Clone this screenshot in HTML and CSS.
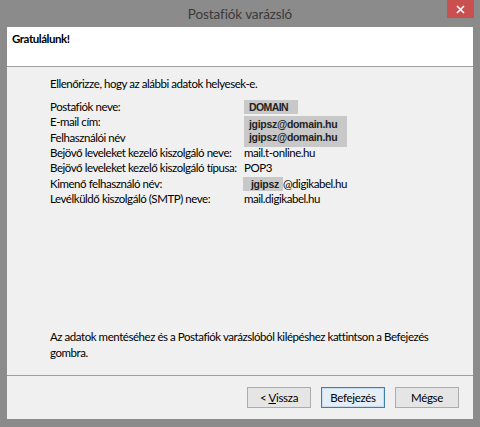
FILE: index.html
```html
<!DOCTYPE html>
<html lang="hu">
<head>
<meta charset="utf-8">
<title>Postafiók varázsló</title>
<link rel="stylesheet" href="styles.css">
</head>
<body>
<div class="window">
  <div class="titlebar">
    <span class="title">Postafiók varázsló</span>
    <div class="close" aria-label="Bezárás">
      <svg width="9" height="9" viewBox="0 0 9 9"><path d="M1 1 L8 8 M8 1 L1 8" stroke="#fff" stroke-width="1.6" fill="none"/></svg>
    </div>
  </div>
  <div class="client">
    <div class="header">Gratulálunk!</div>
    <div class="content">
      <p class="intro">Ellenőrizze, hogy az alábbi adatok helyesek-e.</p>
      <div class="details">
        <div class="label">Postafiók neve:</div>
        <div class="value"><span class="mask mask-domain">DOMAIN</span></div>
        <div class="label">E-mail cím:</div>
        <div class="value value-span"><span class="mask mask-email">jgipsz@domain.hu<br>jgipsz@domain.hu</span></div>
        <div class="label">Felhasználói név</div>
        <div class="label">Bejövő leveleket kezelő kiszolgáló neve:</div>
        <div class="value">mail.t-online.hu</div>
        <div class="label">Bejövő leveleket kezelő kiszolgáló típusa:</div>
        <div class="value">POP3</div>
        <div class="label">Kimenő felhasználó név:</div>
        <div class="value"><span class="mask mask-user">jgipsz</span>@digikabel.hu</div>
        <div class="label">Levélküldő kiszolgáló (SMTP) neve:</div>
        <div class="value">mail.digikabel.hu</div>
      </div>
      <p class="outro">Az adatok mentéséhez és a Postafiók varázslóból kilépéshez kattintson a Befejezés gombra.</p>
    </div>
    <div class="buttons">
      <button class="btn">&lt; <u>V</u>issza</button>
      <button class="btn btn-default">Befejezés</button>
      <button class="btn">Mégse</button>
    </div>
  </div>
</div>
</body>
</html>
```
FILE: styles.css
```css
html, body {
  margin: 0;
  padding: 0;
}
body {
  width: 480px;
  height: 427px;
  background: #8b8b8b;
  font-family: Lato, "Noto Sans", sans-serif;
  font-size: 11.5px;
  letter-spacing: -0.45px;
  color: #000;
  overflow: hidden;
}
.window {
  width: 480px;
  height: 427px;
  display: flex;
  flex-direction: column;
  background: #8b8b8b;
}
.titlebar {
  position: relative;
  height: 27px;
  display: flex;
  align-items: center;
  justify-content: center;
}
.title {
  font-size: 13.5px;
  letter-spacing: -0.1px;
  color: #3a3a3a;
}
.close {
  position: absolute;
  top: 0;
  right: 6px;
  width: 27px;
  height: 18px;
  background: #c9504e;
  display: flex;
  align-items: center;
  justify-content: center;
}
.client {
  margin: 0 7px;
  width: 466px;
  height: 392px;
  display: flex;
  flex-direction: column;
  background: #f0f0f0;
}
.header {
  height: 40px;
  background: #fff;
  border-bottom: 1px solid #a0a0a0;
  font-weight: bold;
  padding: 4px 0 0 5px;
  box-sizing: border-box;
  line-height: 16px;
}
.content {
  height: 308px;
  border-bottom: 1px solid #a0a0a0;
  padding-left: 43px;
  display: flex;
  flex-direction: column;
}
.intro {
  margin: 9px 0 0;
  line-height: 16px;
}
.details {
  display: grid;
  grid-template-columns: 194px auto;
  grid-auto-rows: 15.35px;
  line-height: 15px;
  margin-top: 7px;
}
.label {
  grid-column: 1;
  white-space: nowrap;
}
.value {
  grid-column: 2;
  white-space: nowrap;
}
.value-span {
  grid-row: span 2;
}
.mask {
  display: inline-block;
  background: #c8c8c8;
  font-family: "Liberation Sans", Arial, sans-serif;
  font-weight: bold;
  font-size: 10.5px;
  letter-spacing: -0.3px;
  color: #222;
}
.mask-domain {
  margin-left: 0;
  margin-top: -1px;
  padding: 1px 10px 1px 5px;
  line-height: 12px;
  letter-spacing: -0.6px;
}
.mask-email {
  margin-left: 0;
  margin-top: 2px;
  padding: 2px 10px 3px 5px;
  line-height: 13px;
}
.mask-user {
  margin-left: -1px;
  padding: 0 4px 0 8px;
  line-height: 14px;
}
.outro {
  margin: auto 0 0;
  width: 380px;
  line-height: 16px;
  padding-bottom: 14px;
}
.buttons {
  flex: 1;
  display: flex;
  justify-content: flex-end;
  align-items: flex-start;
  gap: 10px;
  padding: 11px 14px 0 0;
}
.btn {
  width: 64px;
  height: 21px;
  margin: 0;
  padding: 0;
  background: #e5e5e5;
  border: 1px solid #acacac;
  font-family: Lato, "Noto Sans", sans-serif;
  font-size: 11.5px;
  letter-spacing: -0.3px;
  color: #000;
  line-height: 17px;
}
.btn-default {
  border-color: #3c7fb1;
  background: #e5eef7;
  box-shadow: inset 0 0 0 1px #c6dcef;
}
```
